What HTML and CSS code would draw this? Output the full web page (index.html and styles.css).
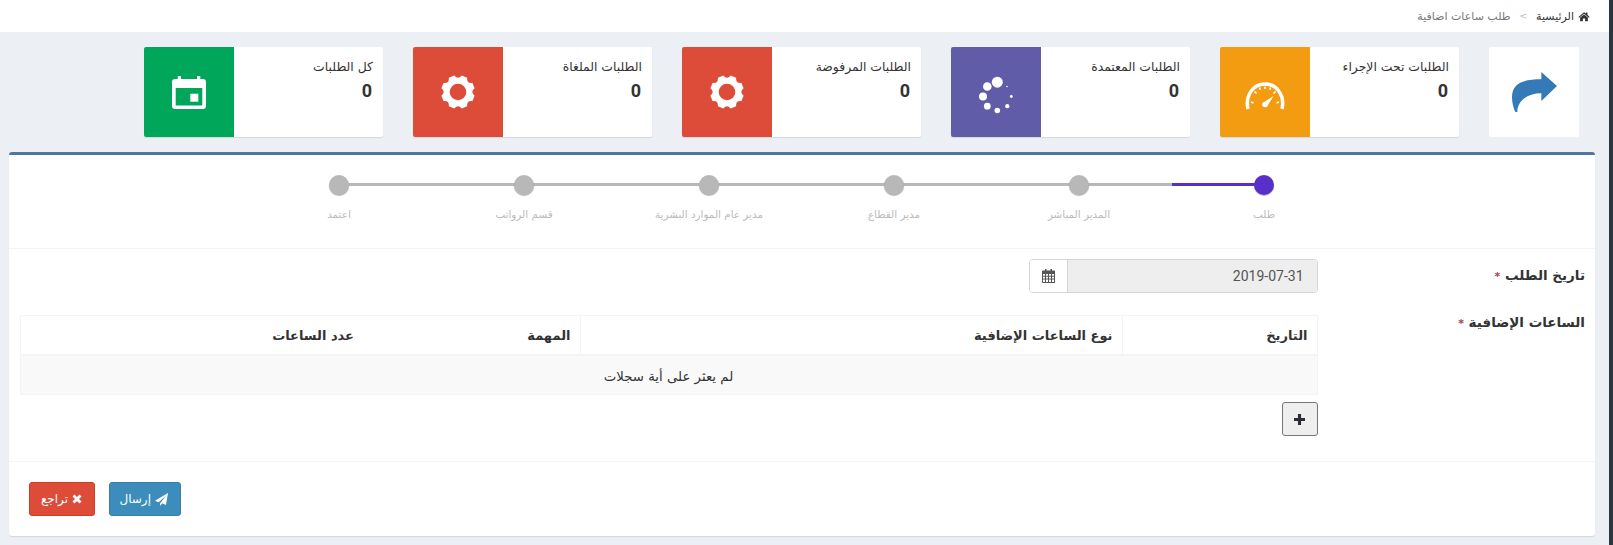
FILE: index.html
```html
<!DOCTYPE html>
<html lang="ar" dir="rtl">
<head>
  <meta charset="UTF-8" />
  <title>طلب ساعات اضافية</title>
  <link rel="stylesheet" href="styles.css">
</head>
<body>

  <div class="breadcrumb">
    <svg class="home-icon" viewBox="0 0 14 12"><path d="M7 1 0.5 6.5l.8.9L7 2.7l5.7 4.7.8-.9L11 4V1.3H9.3v1.300zM2.500 7.300V11.500H5.700V8.300H8.300V11.500H11.500V7.300L7 3.600z"/></svg>
    <a class="crumb-home">الرئيسية</a>
    <span class="crumb-sep">&gt;</span>
    <span class="crumb-page">طلب ساعات اضافية</span>
  </div>

  <div class="stats">
    <div class="back-box">
      <svg class="back-icon" viewBox="0 0 135 120"><path d="M135 42 88 0V22C40 22 0 30 0 76 0 92 4 108 10 120H16C16 88 44 64 88 64V87Z"/></svg>
    </div>

    <div class="info-box">
      <div class="info-icon orange">
        <svg class="gauge-icon" viewBox="0 0 40 28">
          <path class="gauge-arc" d="M3 27C0 14 8 2 20 2S40 14 37 27"/>
          <path class="gauge-ticks" d="M6 20 8.500 21M9.500 9.500 11.500 11.500M20 4.500V7M30.500 9.500 28.500 11.500M34 20 31.500 21M14.500 5.500 15.300 7.800M25.500 5.500 24.700 7.800"/>
          <path class="gauge-needle" d="M28.500 14 22 24.500 18 20.700Z"/>
          <circle cx="20" cy="22.500" r="2.800" fill="#fff"/>
        </svg>
      </div>
      <div class="info-text">
        <span class="info-title">الطلبات تحت الإجراء</span>
        <span class="info-num">0</span>
      </div>
    </div>

    <div class="info-box">
      <div class="info-icon purple">
        <svg class="spin-icon" viewBox="0 0 36 38" fill="#fff">
          <circle cx="19.300" cy="6.200" r="5.500"/>
          <circle cx="9.300" cy="10.500" r="4.300"/>
          <circle cx="5" cy="20.500" r="4"/>
          <circle cx="9.300" cy="30.200" r="3.400"/>
          <circle cx="19.300" cy="34.500" r="2.800"/>
          <circle cx="29.300" cy="30.200" r="2.100"/>
          <circle cx="33.300" cy="20.500" r="1.400"/>
          <circle cx="29" cy="10.500" r="0.800"/>
        </svg>
      </div>
      <div class="info-text">
        <span class="info-title">الطلبات المعتمدة</span>
        <span class="info-num">0</span>
      </div>
    </div>

    <div class="info-box">
      <div class="info-icon red">
        <svg class="gear-icon" viewBox="0 0 34 34"><path fill-rule="evenodd" d="M33.600 20.680 31.340 26.130Q25.500 25.500 26.130 31.340L20.680 33.600Q17 29 13.320 33.600L7.870 31.340Q8.500 25.500 2.660 26.130L.4 20.680Q5 17 .4 13.320L2.660 7.870Q8.500 8.500 7.870 2.660L13.320 .4Q17 5 20.680 .4L26.130 2.660Q25.500 8.500 31.340 7.870L33.600 13.320Q29 17 33.600 20.680ZM25.300 17A8.300 8.300 0 1 0 8.700 17 8.300 8.300 0 1 0 25.300 17Z"/></svg>
      </div>
      <div class="info-text">
        <span class="info-title">الطلبات المرفوضة</span>
        <span class="info-num">0</span>
      </div>
    </div>

    <div class="info-box">
      <div class="info-icon red">
        <svg class="gear-icon" viewBox="0 0 34 34"><path fill-rule="evenodd" d="M33.600 20.680 31.340 26.130Q25.500 25.500 26.130 31.340L20.680 33.600Q17 29 13.320 33.600L7.870 31.340Q8.500 25.500 2.660 26.130L.4 20.680Q5 17 .4 13.320L2.660 7.870Q8.500 8.500 7.870 2.660L13.320 .4Q17 5 20.680 .4L26.130 2.660Q25.500 8.500 31.340 7.870L33.600 13.320Q29 17 33.600 20.680ZM25.300 17A8.300 8.300 0 1 0 8.700 17 8.300 8.300 0 1 0 25.300 17Z"/></svg>
      </div>
      <div class="info-text">
        <span class="info-title">الطلبات الملغاة</span>
        <span class="info-num">0</span>
      </div>
    </div>

    <div class="info-box">
      <div class="info-icon green">
        <svg class="cal-icon" viewBox="0 0 34 33">
          <path fill-rule="evenodd" fill="#fff" d="M5.700 0H9V3H25V0H28.300V3H31A3 3 0 0 1 34 6V30A3 3 0 0 1 31 33H3A3 3 0 0 1 0 30V6A3 3 0 0 1 3 3H5.700ZM3.700 12V29.500H30.300V12Z"/>
          <rect x="18.300" y="17.700" width="8" height="8" fill="#fff"/>
        </svg>
      </div>
      <div class="info-text">
        <span class="info-title">كل الطلبات</span>
        <span class="info-num">0</span>
      </div>
    </div>
  </div>

  <div class="panel">
    <ul class="steps">
      <li class="step active"><span class="dot"></span><span class="step-label">طلب</span></li>
      <li class="step"><span class="dot"></span><span class="step-label">المدير المباشر</span></li>
      <li class="step"><span class="dot"></span><span class="step-label">مدير القطاع</span></li>
      <li class="step"><span class="dot"></span><span class="step-label">مدير عام الموارد البشرية</span></li>
      <li class="step"><span class="dot"></span><span class="step-label">قسم الرواتب</span></li>
      <li class="step"><span class="dot"></span><span class="step-label">اعتمد</span></li>
    </ul>

    <div class="form-body">
      <div class="form-row date-row">
        <label class="form-label">تاريخ الطلب <i class="req">*</i></label>
        <div class="form-field">
          <div class="date-group">
            <input class="date-input" type="text" value="2019-07-31" readonly>
            <span class="date-addon">
              <svg class="addon-icon" viewBox="0 0 13 14"><path fill-rule="evenodd" d="M3 0H4.500V1.500H8.500V0H10V1.500H12.200Q13 1.500 13 2.300V13.200Q13 14 12.200 14H.8Q0 14 0 13.200V2.300Q0 1.500 .8 1.500H3ZM1 5V6.800H3V5ZM4 5V6.800H6V5ZM7 5V6.800H9V5ZM10 5V6.800H12V5ZM1 7.800V9.600H3V7.800ZM4 7.800V9.600H6V7.800ZM7 7.800V9.600H9V7.800ZM10 7.800V9.600H12V7.800ZM1 10.600V13H3V10.600ZM4 10.600V13H6V10.600ZM7 10.600V13H9V10.600ZM10 10.600V13H12V10.600Z"/></svg>
            </span>
          </div>
        </div>
      </div>

      <div class="form-row">
        <label class="form-label hours-label">الساعات الإضافية <i class="req">*</i></label>
        <div class="form-field hours-field">
          <table class="hours-table">
            <thead>
              <tr>
                <th class="col-date">التاريخ</th>
                <th class="col-type">نوع الساعات الإضافية</th>
                <th class="col-task">المهمة</th>
                <th>عدد الساعات</th>
              </tr>
            </thead>
            <tbody>
              <tr><td colspan="4">لم يعثر على أية سجلات</td></tr>
            </tbody>
          </table>
          <button class="add-btn" type="button">
            <svg class="plus-icon" viewBox="0 0 12 12"><path d="M4.300 0H7.700V4.300H12V7.700H7.700V12H4.300V7.700H0V4.300H4.300Z"/></svg>
          </button>
        </div>
      </div>
    </div>

    <div class="form-actions">
      <button class="btn btn-send" type="button">
        <svg class="btn-icon" viewBox="0 0 14 14"><path d="M14 0 11.800 12.800 7.800 11 5.500 14V11L12 3 3.800 10 0 8.300Z"/></svg>
        إرسال
      </button>
      <button class="btn btn-back" type="button">
        <svg class="btn-icon x-icon" viewBox="0 0 12 12"><path d="M3 .6 6 3.600 9 .6 11.400 3 8.400 6 11.400 9 9 11.400 6 8.400 3 11.400 .6 9 3.600 6 .6 3Z"/></svg>
        تراجع
      </button>
    </div>
  </div>

</body>
</html>
```
FILE: styles.css
```css
* {
  box-sizing: border-box;
}

body {
  margin: 0;
  height: 545px;
  overflow: hidden;
  background: #ecf0f5;
  border-right: 4px solid #2b353d;
  font-family: "DejaVu Sans", sans-serif;
  font-size: 12px;
  color: #333;
}

.breadcrumb {
  display: flex;
  align-items: center;
  height: 32px;
  padding-right: 19px;
  background: white;
  font-size: 11px;
}

.home-icon {
  width: 12px;
  height: 11px;
  margin-left: 4px;
  fill: #333;
}

.crumb-home {
  color: #333;
}

.crumb-sep {
  margin: 0 9px;
  color: #bbb;
  font-size: 9px;
}

.crumb-page {
  color: #777;
}

.stats {
  display: flex;
  gap: 30px;
  padding: 15px 30px 0 0;
}

.back-box {
  display: flex;
  justify-content: center;
  align-items: center;
  width: 90px;
  height: 90px;
  background: white;
  border-radius: 2px 0 0 2px;
}

.back-icon {
  width: 45px;
  height: 40px;
  fill: #337ab7;
}

.info-box {
  display: flex;
  flex-direction: row-reverse;
  width: 239px;
  height: 90px;
  background: white;
  border-radius: 2px;
  box-shadow: 0 1px 1px rgba(0, 0, 0, 0.1);
}

.info-icon {
  display: flex;
  flex: none;
  justify-content: center;
  align-items: center;
  width: 90px;
  border-radius: 2px 0 0 2px;
}

.orange { background: #f39c12; }
.purple { background: #605ca8; }
.red { background: #dd4b39; }
.green { background: #00a65a; }

.info-text {
  flex: 1;
  display: flex;
  flex-direction: column;
  padding: 10px 10px 0 0;
}

.info-title {
  font-size: 12.400px;
  line-height: 20px;
  color: #333;
}

.info-num {
  margin-top: 2px;
  padding-right: 1px;
  font-family: Roboto, sans-serif;
  font-size: 18px;
  font-weight: bold;
  line-height: 24px;
}

.gauge-icon {
  width: 40px;
  height: 28px;
  margin-top: 7px;
}

.gauge-arc {
  fill: none;
  stroke: white;
  stroke-width: 3.5;
}

.gauge-ticks {
  fill: none;
  stroke: white;
  stroke-width: 1.5;
}

.gauge-needle {
  fill: white;
}

.spin-icon {
  width: 36px;
  height: 38px;
  margin-top: 5px;
}

.gear-icon {
  width: 34px;
  height: 34px;
  fill: white;
}

.cal-icon {
  width: 34px;
  height: 33px;
}

.panel {
  margin: 15px 14px 0 0;
  width: 1586px;
  height: 384px;
  background: white;
  border-top: 3px solid #4f76a0;
  border-radius: 3px;
  box-shadow: 0 1px 1px rgba(0, 0, 0, 0.1);
}

.steps {
  display: flex;
  margin: 0;
  padding: 0 238.500px 0 0;
  height: 94px;
  list-style: none;
  border-bottom: 1px solid #f4f4f4;
}

.step {
  position: relative;
  display: flex;
  flex-direction: column;
  align-items: center;
  width: 185px;
  padding-top: 20px;
}

.step:not(:last-child)::after {
  content: "";
  position: absolute;
  top: 28px;
  right: 50%;
  width: 100%;
  height: 3px;
  background: #b8b8b8;
}

.step.active::before {
  content: "";
  position: absolute;
  z-index: 1;
  top: 28px;
  left: calc(50% - 92px);
  width: 92px;
  height: 3px;
  background: #5a2fc9;
}

.dot {
  position: relative;
  z-index: 2;
  width: 20px;
  height: 20px;
  border-radius: 50%;
  background: #b8b8b8;
  box-shadow: 0 1px 1px rgba(0, 0, 0, 0.3);
}

.active .dot {
  background: #5a2fc9;
}

.step-label {
  margin-top: 12px;
  font-size: 10.400px;
  line-height: 14px;
  color: #bbb;
}

.form-body {
  padding-top: 10px;
  height: 213px;
  border-bottom: 1px solid #f4f4f4;
}

.form-row {
  display: flex;
}

.date-row {
  height: 52px;
}

.form-label {
  width: 277.500px;
  padding: 6px 10px 0 0;
  font-size: 13.500px;
  font-weight: bold;
  line-height: 20px;
}

.hours-label {
  padding-top: 1px;
}

.req {
  color: #a94442;
  font-size: 11px;
  font-style: normal;
}

.form-field {
  width: 1298px;
}

.hours-field {
  padding-top: 4px;
}

.date-group {
  display: flex;
  width: 289px;
  height: 34px;
  border: 1px solid #d2d6de;
  border-radius: 4px;
  overflow: hidden;
}

.date-input {
  flex: 1;
  min-width: 0;
  padding: 0 13px;
  border: 0;
  background: #eee;
  color: #555;
  font-family: Roboto, sans-serif;
  font-size: 14px;
  text-align: right;
  direction: ltr;
}

.date-addon {
  display: flex;
  justify-content: center;
  align-items: center;
  width: 38px;
  background: white;
  border-right: 1px solid #d2d6de;
}

.addon-icon {
  width: 13px;
  height: 14px;
  fill: #555;
}

.hours-table {
  width: 100%;
  border-collapse: collapse;
  table-layout: fixed;
  border: 1px solid #f4f4f4;
}

.hours-table th {
  height: 39px;
  padding: 2px 9px 0;
  border-bottom: 2px solid #f4f4f4;
  font-size: 13px;
  text-align: right;
}

.col-date {
  width: 195px;
  border-left: 1px solid #f4f4f4;
}

.col-type {
  width: 542px;
  border-left: 1px solid #f4f4f4;
}

.col-task {
  width: 217px;
}

.hours-table td {
  height: 40px;
  padding-top: 5px;
  background: #f9f9f9;
  border-bottom: 1px solid #f4f4f4;
  font-size: 13.300px;
  text-align: center;
}

.add-btn {
  display: flex;
  justify-content: center;
  align-items: center;
  width: 36px;
  height: 34px;
  margin-top: 7px;
  padding: 0;
  background: #eee;
  border: 1px solid #777;
  border-radius: 3px;
}

.plus-icon {
  width: 11px;
  height: 11px;
  fill: #2b2b3a;
}

.form-actions {
  display: flex;
  flex-direction: row-reverse;
  justify-content: flex-end;
  gap: 14px;
  padding: 20px 0 0 0;
  margin-left: 20px;
  direction: ltr;
}

.btn {
  display: flex;
  direction: rtl;
  align-items: center;
  gap: 4px;
  height: 34px;
  padding: 0 12px;
  border: 1px solid;
  border-radius: 3px;
  color: white;
  font-family: "DejaVu Sans", sans-serif;
  font-size: 12px;
}

.btn-send {
  width: 72px;
  background: #3c8dbc;
  border-color: #367fa9;
}

.btn-back {
  width: 66px;
  background: #dd4b39;
  border-color: #d73925;
}

.btn-icon {
  flex: none;
  width: 13px;
  height: 13px;
  fill: white;
}

.x-icon {
  width: 10px;
  height: 10px;
}
```
